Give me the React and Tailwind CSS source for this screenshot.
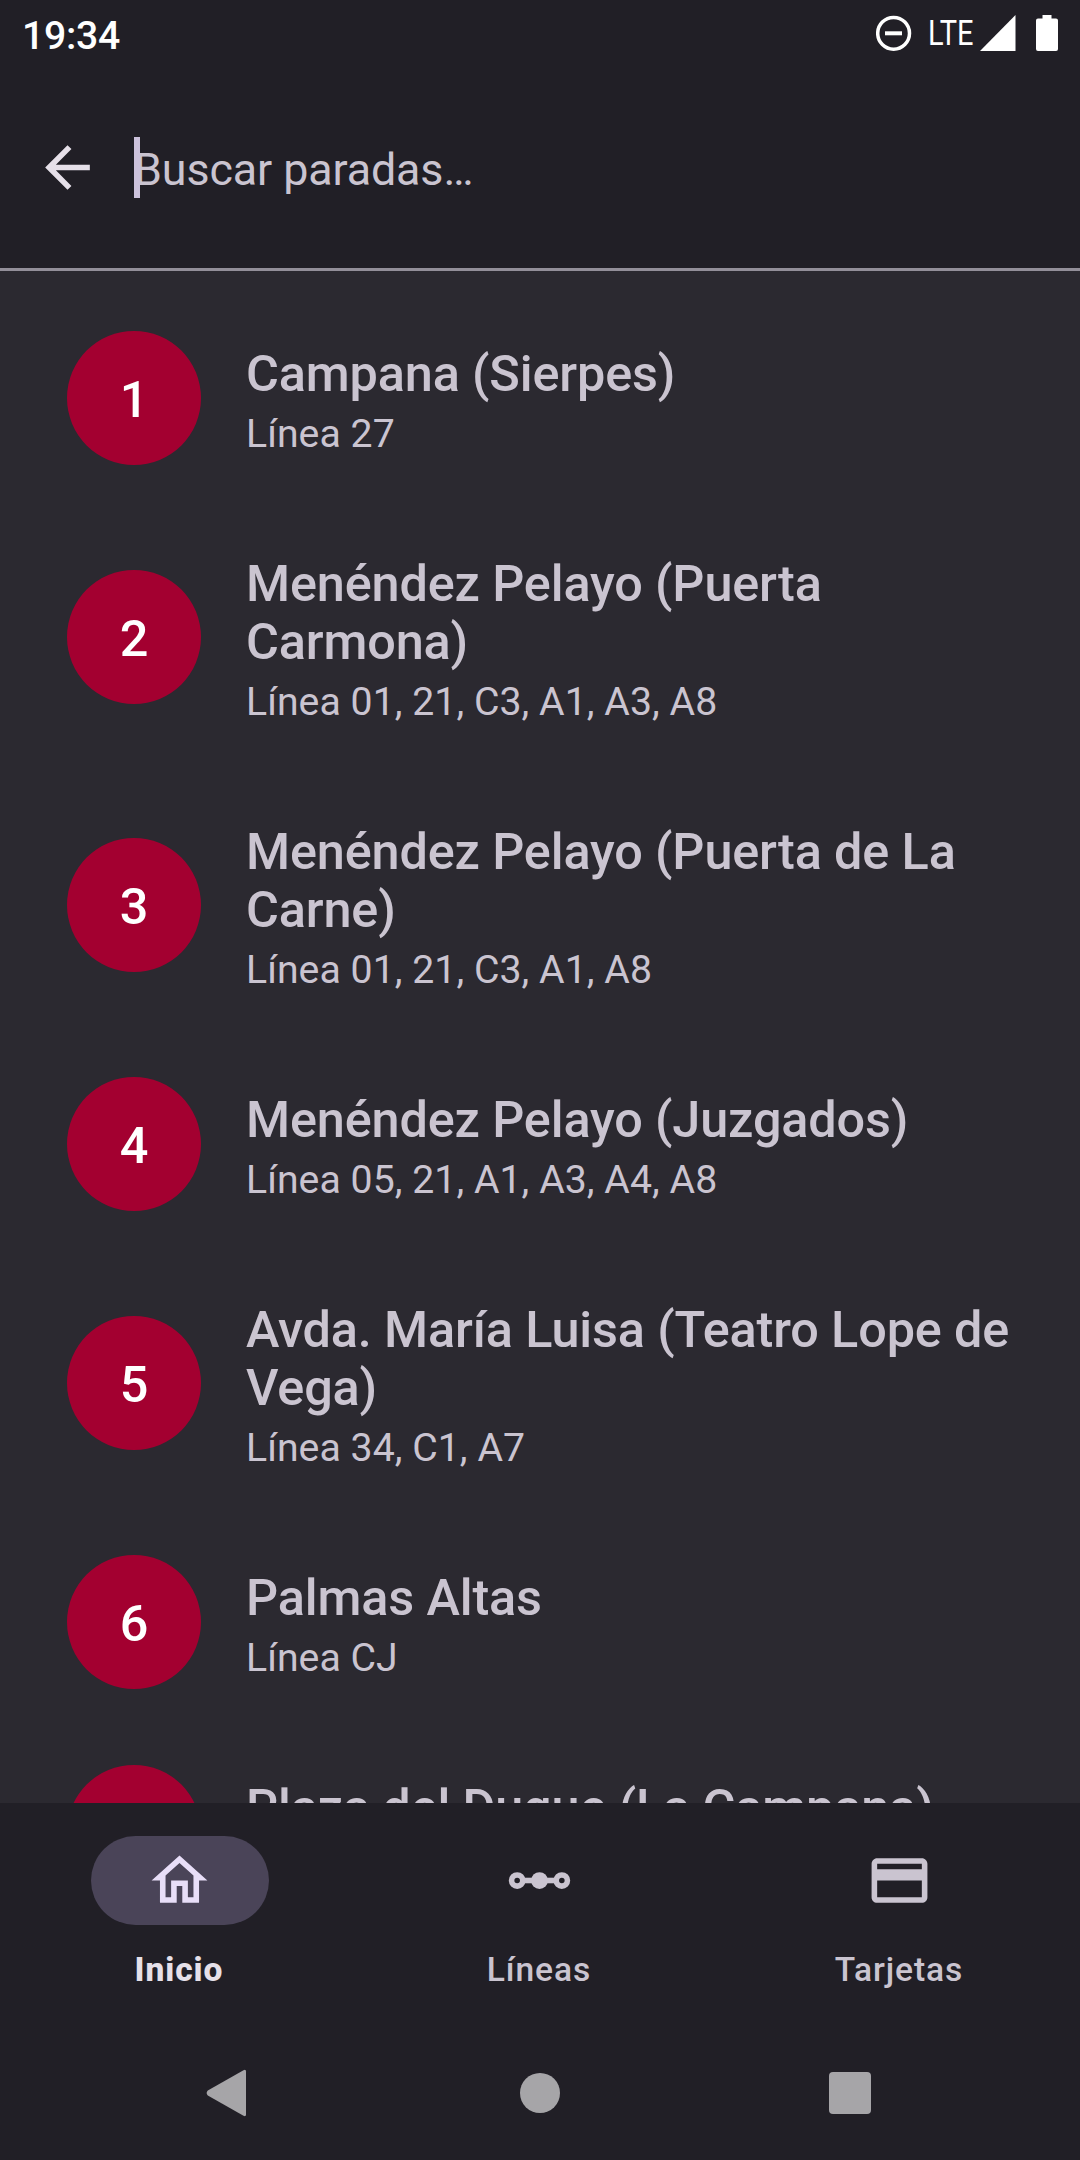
const stops = [
  { id: 1, name: "Campana (Sierpes)", lines: "Línea 27" },
  { id: 2, name: "Menéndez Pelayo (Puerta Carmona)", lines: "Línea 01, 21, C3, A1, A3, A8" },
  { id: 3, name: "Menéndez Pelayo (Puerta de La Carne)", lines: "Línea 01, 21, C3, A1, A8" },
  { id: 4, name: "Menéndez Pelayo (Juzgados)", lines: "Línea 05, 21, A1, A3, A4, A8" },
  { id: 5, name: "Avda. María Luisa (Teatro Lope de Vega)", lines: "Línea 34, C1, A7" },
  { id: 6, name: "Palmas Altas", lines: "Línea CJ" },
  { id: 7, name: "Plaza del Duque (La Campana)" },
];

function StatusBar() {
  return (
    <div className="flex h-[67px] shrink-0 items-start justify-between pl-[22px] pr-[22px]">
      <span className="mt-[13px] text-[39.2px] font-medium leading-[46px] tracking-[-0.3px] text-white">19:34</span>
      <div className="flex items-start pt-[15px] text-white">
        <svg className="h-[36px] w-[36px]" viewBox="0 0 36 36" fill="none" stroke="currentColor">
          <circle cx="17.6" cy="18.3" r="15.9" strokeWidth="3.5" />
          <path d="M9 18.3h17" strokeWidth="4" />
        </svg>
        <span className="ml-[16px] w-[48px] origin-left scale-x-[0.84] whitespace-nowrap text-[34.5px] leading-[36px]">LTE</span>
        <svg className="ml-[4px] h-[36px] w-[36px]" viewBox="0 0 36 36" fill="currentColor">
          <path d="M0 36L35.5 0v36z" />
        </svg>
        <svg className="ml-[20px] h-[36px] w-[22px]" viewBox="0 0 22 36" fill="currentColor">
          <path d="M6.5 0h9v3.5H20a2 2 0 0 1 2 2V34a2 2 0 0 1-2 2H2a2 2 0 0 1-2-2V5.500a2 2 0 0 1 2-2h4.500z" />
        </svg>
      </div>
    </div>
  );
}

function SearchBar() {
  return (
    <div className="flex h-[204px] shrink-0 items-start border-b-[3px] border-[#938f99] pl-[34px]">
      <svg className="mt-[67px] h-[67px] w-[67px] text-[#e6e0e9]" viewBox="0 0 24 24" fill="currentColor">
        <path d="M20 11H7.830l5.590-5.590L12 4l-8 8 8 8 1.410-1.410L7.830 13H20v-2z" />
      </svg>
      <div className="relative ml-[33px] mt-[76px] text-[44.8px] leading-[53px] tracking-[-0.1px] text-[#cac4d0]">
        Buscar paradas…
        <span className="absolute left-0 top-[-6px] h-[61px] w-[6px] bg-[#ccc2dc]" />
      </div>
    </div>
  );
}

function StopRow({ stop }) {
  return (
    <li className="flex items-center pl-[67px] pr-14">
      <div className="flex h-[134px] w-[134px] shrink-0 items-center justify-center rounded-full bg-[#a30030] pt-[3px] text-[50.4px] font-medium leading-[59px] text-white">
        {stop.id}
      </div>
      <div className="ml-[45px] pb-[46px] pt-[52px] text-[#cac4d0]">
        <div className="text-[50.4px] font-medium leading-[58px] tracking-[-0.14px]">{stop.name}</div>
        <div className="mt-2 h-[46px] text-[39.2px] leading-[46px] tracking-[0.05px]">{stop.lines}</div>
      </div>
    </li>
  );
}

function HomeIcon() {
  return (
    <svg className="h-[67px] w-[67px] text-[#e8def8]" viewBox="0 0 24 24" fill="currentColor">
      <path d="M12 3L2 12h3v8h6v-6h2v6h6v-8h3L12 3zm5 15h-2v-6H9v6H7v-7.810l5-4.500 5 4.500V18z" />
    </svg>
  );
}

function LineIcon() {
  return (
    <svg className="h-[67px] w-[67px]" viewBox="0 0 24 24" fill="none" stroke="currentColor" strokeWidth="2">
      <circle cx="4" cy="12" r="2" />
      <circle cx="20" cy="12" r="2" />
      <circle cx="12" cy="12" r="3" fill="currentColor" stroke="none" />
      <path d="M6.500 12h11" />
    </svg>
  );
}

function CardIcon() {
  return (
    <svg className="h-[67px] w-[67px]" viewBox="0 0 24 24" fill="currentColor">
      <path d="M20 4H4c-1.110 0-1.990.890-1.990 2L2 18c0 1.110.890 2 2 2h16c1.110 0 2-.890 2-2V6c0-1.110-.890-2-2-2zm0 14H4v-6h16v6zm0-10H4V6h16v2z" />
    </svg>
  );
}

function NavItem({ label, icon, active }) {
  return (
    <button className="flex flex-col items-center pt-[33px]">
      <span className={active ? "flex h-[89px] w-[178px] items-center justify-center rounded-full bg-[#4a4458] pr-px" : "flex h-[89px] w-[178px] items-center justify-center pr-px text-[#cac4d0]"}>
        {icon}
      </span>
      <span className={active ? "mt-[25px] pr-[2px] text-[33.6px] font-extrabold leading-[40px] tracking-[0.9px] text-[#e6e0e9]" : "mt-[25px] pr-[2px] text-[33.6px] font-medium leading-[40px] tracking-[0.9px] text-[#cac4d0]"}>
        {label}
      </span>
    </button>
  );
}

export default function App() {
  return (
    <div className="flex h-[2160px] w-[1080px] flex-col overflow-hidden bg-[#211f26] font-['Roboto',sans-serif]">
      <StatusBar />
      <SearchBar />
      <ul className="h-[1532px] shrink-0 overflow-hidden bg-[#2b2930] pt-[22px]">
        {stops.map((stop) => (
          <StopRow key={stop.id} stop={stop} />
        ))}
      </ul>
      <nav className="grid h-[223px] shrink-0 grid-cols-3 items-start">
        <NavItem label="Inicio" icon={<HomeIcon />} active />
        <NavItem label="Líneas" icon={<LineIcon />} />
        <NavItem label="Tarjetas" icon={<CardIcon />} />
      </nav>
      <div className="flex h-[134px] shrink-0 items-center pl-[206px] text-[#a6a5a8]">
        <svg className="h-[48px] w-[41px]" viewBox="0 0 41 48" fill="currentColor">
          <path d="M1.800 21.500 37.500 1.300Q40 0 40 2.500v43Q40 48 37.500 46.700L1.800 26.500Q-.500 24 1.800 21.500z" />
        </svg>
        <div className="ml-[273px] h-[40px] w-[40px] rounded-full bg-current" />
        <div className="ml-[269px] h-[42px] w-[42px] rounded-[4px] bg-current" />
      </div>
    </div>
  );
}
